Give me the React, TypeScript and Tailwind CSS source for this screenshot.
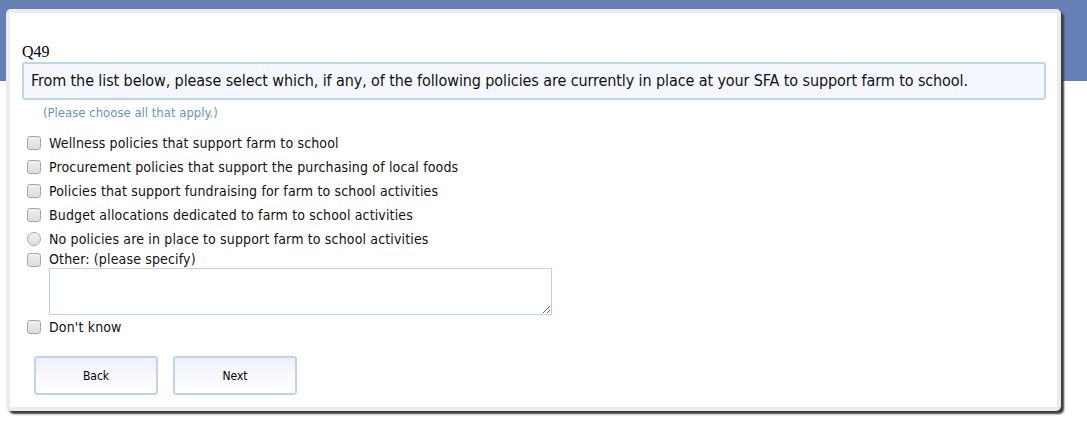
import React from "react";

const options = [
  { label: "Wellness policies that support farm to school", kind: "box" },
  { label: "Procurement policies that support the purchasing of local foods", kind: "box" },
  { label: "Policies that support fundraising for farm to school activities", kind: "box" },
  { label: "Budget allocations dedicated to farm to school activities", kind: "box" },
  { label: "No policies are in place to support farm to school activities", kind: "radio" },
];

const tahoma = { fontFamily: '"DejaVu Sans Condensed", "DejaVu Sans", sans-serif' };

function Box({ radio }: { radio?: boolean }) {
  return (
    <span
      className={`inline-block w-[14px] h-[14px] shrink-0 border border-[#a9a9a9] bg-[linear-gradient(#f0f0f0,#dcdcdc)] ${
        radio ? "rounded-full" : "rounded-[3px]"
      }`}
    />
  );
}

export default function App() {
  return (
    <div className="w-[1087px] h-[431px] bg-[linear-gradient(#6680b5_0_81px,#ffffff_81px)] pt-[9px] pl-[6px]">
      <div className="w-[1055px] h-[402px] border-4 border-[#ececec] rounded-[5px] bg-white shadow-[3px_3px_2px_#3c3c3c] pl-[12px] pr-[11px]">
        <div
          className="pt-[28px] text-[16px] leading-[21px] text-black"
          style={{ fontFamily: '"Liberation Serif", serif' }}
        >
          Q49
        </div>
        <div
          className="h-[38px] w-[1024px] border-2 border-[#bfd5e1] rounded-[3px] bg-[#f5f7fe] pl-[7px] flex items-center text-[16px] tracking-[-0.1px] text-[#111]"
          style={tahoma}
        >
          From the list below, please select which, if any, of the following policies are currently in place at your SFA to support farm to school.
        </div>
        <div className="pl-[21px] pt-[5px] text-[13px] leading-[16px] text-[#6897ad]" style={tahoma}>
          (Please choose all that apply.)
        </div>
        <div className="pt-[10px] pl-[5px] text-[14px] tracking-[0.15px] text-[#111]" style={tahoma}>
          {options.map((o) => (
            <div key={o.label} className="flex items-center h-[24px]">
              <Box radio={o.kind === "radio"} />
              <span className="ml-[8px]">{o.label}</span>
            </div>
          ))}
          <div className="flex items-center h-[17px]">
            <Box />
            <span className="ml-[8px]">Other: (please specify)</span>
          </div>
          <textarea
            className="block ml-[22px] w-[503px] h-[47px] border border-[#b9d3e0] bg-white outline-none resize"
            aria-label="Other"
          />
          <div className="flex items-center h-[24px]">
            <Box />
            <span className="ml-[8px]">Don't know</span>
          </div>
        </div>
        <div className="flex gap-[15px] pl-[12px] pt-[17px]" style={tahoma}>
          {["Back", "Next"].map((b) => (
            <button
              key={b}
              className="w-[124px] h-[39px] border-2 border-[#bfd5e1] rounded-[3px] bg-[linear-gradient(#f0f0fc,#ffffff)] text-[12px] text-black"
            >
              {b}
            </button>
          ))}
        </div>
      </div>
    </div>
  );
}
